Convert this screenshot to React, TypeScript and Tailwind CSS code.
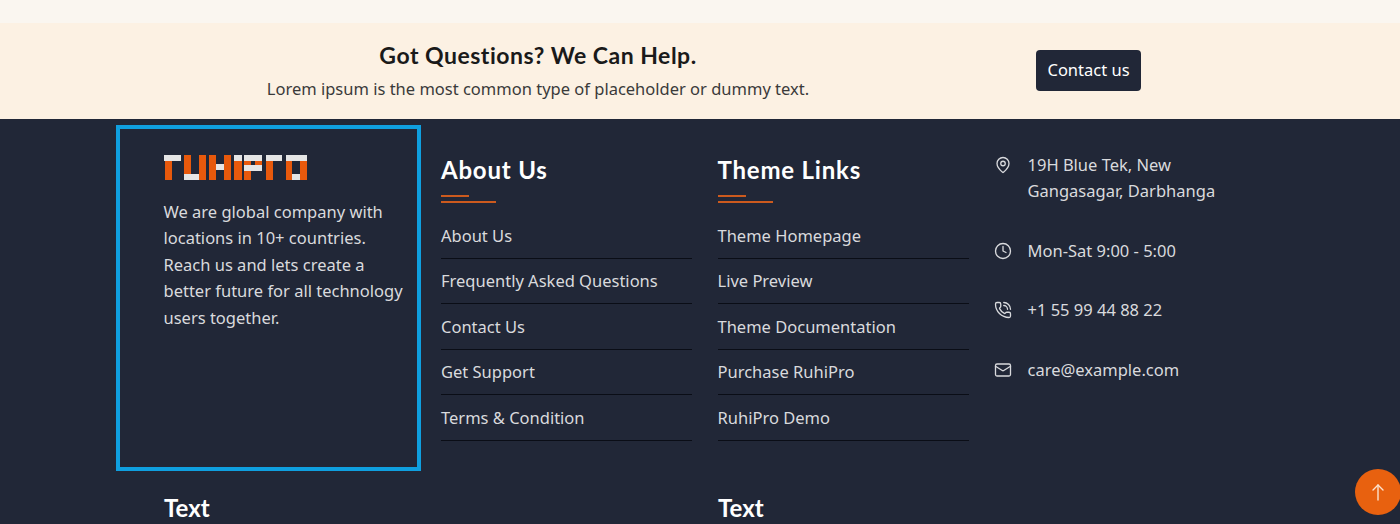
import { Clock, Mail, MapPin, PhoneCall } from 'lucide-react';

const aboutLinks = ['About Us', 'Frequently Asked Questions', 'Contact Us', 'Get Support', 'Terms & Condition'];
const themeLinks = ['Theme Homepage', 'Live Preview', 'Theme Documentation', 'Purchase RuhiPro', 'RuhiPro Demo'];

const headingFont = "font-['Lato',sans-serif]";

function Logo() {
  const o = '#e8590c';
  const w = '#e5e5e5';
  const bars: [number, number, number, number, string][] = [
    // r
    [0, 0, 17, 6, w], [1, 6, 7, 19, o],
    // u
    [20, 0, 7, 19, o], [20, 19, 15, 6, w], [35, 0, 7, 25, o],
    // h
    [45, 0, 7, 25, o], [52, 9, 8, 6, w], [60, 0, 7, 25, o],
    // i
    [70, 0, 8, 6, w], [70, 6, 8, 19, o],
    // p
    [80, 0, 18, 6, w], [80, 6, 7, 4, o], [80, 10, 18, 6, w], [80, 16, 7, 9, o], [91, 6, 7, 4, o],
    // r
    [102, 0, 16, 6, w], [102, 6, 7, 19, o],
    // o
    [122, 0, 21, 6, w], [122, 6, 6, 19, o], [136, 6, 7, 19, o], [128, 19, 8, 6, w],
  ];
  return (
    <svg width="143" height="25" viewBox="0 0 143 25" className="block">
      {bars.map(([x, y, bw, bh, fill], i) => (
        <rect key={i} x={x} y={y} width={bw} height={bh} fill={fill} />
      ))}
    </svg>
  );
}

function LinkColumn({ title, links, width }: { title: string; links: string[]; width: string }) {
  return (
    <div className={`${width} shrink-0 pt-[27px]`}>
      <h3 className={`${headingFont} text-[24px] leading-[36px] font-bold tracking-[0.8px] text-white`}>{title}</h3>
      <div className="mt-[7px] flex h-[8px] w-[55px] flex-col justify-between">
        <span className="block h-[2px] w-[28px] bg-[#cc5a1e]" />
        <span className="block h-[2px] w-[55px] bg-[#cc5a1e]" />
      </div>
      <ul className="mt-[10.25px]">
        {links.map((l) => (
          <li key={l} className="h-[45.5px] border-b border-[#0a0d16] pt-[9.25px] text-[16.5px] leading-[26px] text-[#d9dadd]">
            {l}
          </li>
        ))}
      </ul>
    </div>
  );
}

function ContactRow({ icon, children }: { icon: React.ReactNode; children: React.ReactNode }) {
  return (
    <div className="-ml-[1px] flex">
      <span className="mt-[4px] mr-[16px] shrink-0">{icon}</span>
      <span>{children}</span>
    </div>
  );
}

export default function App() {
  return (
    <div className="relative h-[524px] overflow-hidden bg-[#212737] font-['Noto_Sans',sans-serif]">
      <div className="h-[23px] bg-[#faf6f0]" />

      {/* Questions banner */}
      <div className="flex h-[96px] items-center bg-[#fcf1e3] pl-[116px]">
        <div className="w-[844px] pb-[3px] text-center">
          <h2 className={`${headingFont} text-[23px] leading-[36px] font-bold tracking-[0.5px] text-[#1a1a1a]`}>
            Got Questions? We Can Help.
          </h2>
          <p className="mt-[3px] text-[16.5px] leading-[26px] text-[#3a3a3a]">
            Lorem ipsum is the most common type of placeholder or dummy text.
          </p>
        </div>
        <button className="mb-[1px] ml-[76px] h-[41px] w-[105px] rounded-[4px] bg-[#212737] text-[16.5px] text-white">
          Contact us
        </button>
      </div>

      {/* Footer */}
      <div className="flex pt-[6px] pl-[116px]">
        <div className="h-[346px] w-[305px] shrink-0 border-4 border-[#0f9fdf] pt-[26px] pr-[10px] pl-[43.5px]">
          <Logo />
          <p className="mt-[19px] text-[16.5px] leading-[26.4px] text-[#d9dadd]">
            We are global company with locations in 10+ countries. Reach us and lets create a better future for all
            technology users together.
          </p>
        </div>
        <div className="ml-[20px] flex gap-[25.5px]">
          <LinkColumn title="About Us" links={aboutLinks} width="w-[251px]" />
          <LinkColumn title="Theme Links" links={themeLinks} width="w-[251.5px]" />
          <div className="flex w-[240px] flex-col gap-[33px] pt-[27px] text-[16.5px] leading-[26.4px] text-[#d9dadd]">
            <ContactRow icon={<MapPin className="h-[18px] w-[18px]" strokeWidth={1.75} />}>
              19H Blue Tek, New
              <br />
              Gangasagar, Darbhanga
            </ContactRow>
            <ContactRow icon={<Clock className="h-[18px] w-[18px]" strokeWidth={1.75} />}>Mon-Sat 9:00 - 5:00</ContactRow>
            <ContactRow icon={<PhoneCall className="h-[18px] w-[18px]" strokeWidth={1.75} />}>+1 55 99 44 88 22</ContactRow>
            <ContactRow icon={<Mail className="h-[18px] w-[18px]" strokeWidth={1.75} />}>care@example.com</ContactRow>
          </div>
        </div>
      </div>

      {/* Second row */}
      <div className="mt-[19px] flex pl-[164px]">
        <h3 className={`${headingFont} w-[554px] text-[24px] leading-[36px] font-bold text-white`}>Text</h3>
        <h3 className={`${headingFont} text-[24px] leading-[36px] font-bold text-white`}>Text</h3>
      </div>

      <button className="absolute top-[469px] right-[-1px] flex h-[46px] w-[46px] items-center justify-center rounded-full bg-[#e8610f] text-[#fde3cf]">
        <svg width="12" height="17" viewBox="0 0 12 17" fill="none" stroke="currentColor" strokeWidth="1.4" strokeLinecap="round" strokeLinejoin="round">
          <path d="M6 16V1" />
          <path d="M1 6l5-5 5 5" />
        </svg>
      </button>
    </div>
  );
}
